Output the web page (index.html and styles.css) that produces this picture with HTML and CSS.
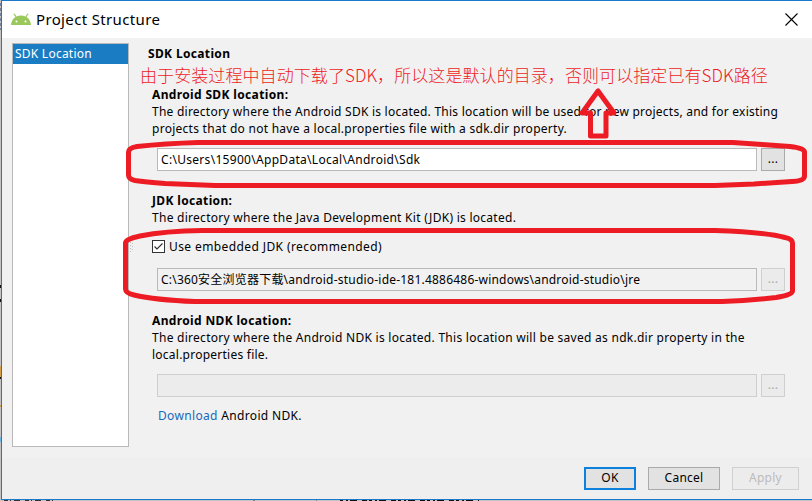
FILE: index.html
```html
<!DOCTYPE html>
<html lang="en">
<head>
<meta charset="utf-8">
<title>Project Structure</title>
<link rel="stylesheet" href="styles.css">
</head>
<body>
<div class="dialog">
  <header class="titlebar">
    <svg class="robot" width="20" height="13" viewBox="0 0 20 13"><path d="M0 12C.3 8.200 2 5.500 4.500 4L2.500 1 3.500.4 5.600 3.500Q10 1.700 14.400 3.500L16.500.4 17.500 1 15.500 4C18 5.500 19.700 8.200 20 12Z" fill="#9bc85b"/><circle cx="5.500" cy="8.500" r="1" fill="#fff"/><circle cx="14.500" cy="8.500" r="1" fill="#fff"/></svg>
    <h1 class="title">Project Structure</h1>
    <svg class="close" width="13" height="13" viewBox="0 0 13 13"><path d="M.5.500l12 12M12.500.500l-12 12" stroke="#000" stroke-width="1.100"/></svg>
  </header>
  <main class="body">
    <nav class="sidebar"><div class="item">SDK Location</div></nav>
    <div class="content">
      <h2 class="heading">SDK Location</h2>
      <section class="sdk">
        <h3>Android SDK location:</h3>
        <p>The directory where the Android SDK is located. This location will be used for new projects, and for existing<br><span class="wider">projects that do not have a local.properties file with a sdk.dir property.</span></p>
        <div class="row"><div class="field"><span class="path">C:\Users\15900\AppData\Local\Android\Sdk</span></div><div class="browse">...</div></div>
      </section>
      <section class="jdk">
        <h3>JDK location:</h3>
        <p class="wider">The directory where the Java Development Kit (JDK) is located.</p>
        <div class="check"><svg width="13" height="13" viewBox="0 0 13 13"><rect x=".5" y=".5" width="12" height="12" fill="#fff" stroke="#333"/><path d="M2.500 6.500L5 9l5.500-5.500" fill="none" stroke="#333" stroke-width="1.200"/></svg><span class="check-label">Use embedded JDK (recommended)</span></div>
        <div class="row"><div class="field readonly">C:\360安全浏览器下载\android-studio-ide-181.4886486-windows\android-studio\jre</div><div class="browse off">...</div></div>
      </section>
      <section class="ndk">
        <h3>Android NDK location:</h3>
        <p><span class="wider">The directory where the Android NDK is located. This location will be saved as ndk.dir property in the</span><br>local.properties file.</p>
        <div class="row"><div class="field disabled"></div><div class="browse off">...</div></div>
        <div class="download"><a>Download</a> Android NDK.</div>
      </section>
    </div>
  </main>
  <footer class="footer">
    <div class="btn ok">OK</div><div class="btn cancel">Cancel</div><div class="btn apply">Apply</div>
  </footer>
</div>
<div class="note">由于安装过程中自动下载了SDK，所以这是默认的目录，否则可以指定已有SDK路径</div>
<svg class="marks" width="812" height="501" viewBox="0 0 812 501">
  <g fill="none" stroke="#ed1c24" stroke-width="5" stroke-linejoin="round">
    <path d="M198 142.500H733L762 144.500 790 146.500Q804.500 148 804.500 152V176Q804.500 181 792 181.500L754 184 715 185.500H215L165 183.500Q145 182 135 180.500Q128.500 179 128.500 175V152Q128.500 148 137 146.500Q165 143.500 198 142.500Z"/>
    <path d="M202 230.500H715Q765 232 785 237.500Q792.500 239 792.500 243V291Q792.500 295 776 297.500Q750 300.500 722 301.500H195Q155 300 134 295Q125.500 293 125.500 289V243Q125.500 239 140 236Q165 231 202 230.500Z"/>
    <path d="M598 91L582 113H590.500V136H606V113H614Z"/>
  </g>
  <path d="M130.500 242v10M132.500 243v9" stroke="#bbb" stroke-dasharray="1 2"/>
</svg>
<svg class="edge" width="812" height="501" viewBox="0 0 812 501">
  <path d="M0 0h1v501H0zM0 500h812v1H0z" fill="#c4c4c4"/>
  <path d="M.5 3v27" stroke="#71839c" stroke-dasharray="3 2"/>
  <path d="M.5 285v3M.5 299v3" stroke="#111"/>
  <path d="M.5 366v11M.5 405v2" stroke="#d4a04b"/>
  <path d="M.5 377v2" stroke="#111"/>
  <path d="M.5 437v5" stroke="#6bb6e5"/>
  <path d="M4 500.500h52" stroke="#333" stroke-dasharray="4 2 1 3 6 5"/>
  <path d="M340 500.500h139" stroke="#111" stroke-dasharray="3 3 2 2 7 5 5 2"/>
  <path d="M253 500.500h2M316 500.500h1" stroke="#888"/>
</svg>
</body>
</html>
```
FILE: styles.css
```css
* { box-sizing: border-box; }
body { margin: 0; width: 812px; height: 501px; overflow: hidden; position: relative; background: #c4c4c4; font: 12px/17px "Noto Sans", "Noto Sans CJK SC", sans-serif; letter-spacing: .24px; color: #000; }
h1, h2, h3, p { margin: 0; font-size: inherit; font-weight: 400; }
.dialog { width: 811px; height: 500px; margin-left: 1px; border: solid #1979ca; border-width: 1px 0 1px 1px; background: #f1f1f1; display: flex; flex-direction: column; white-space: nowrap; }
.titlebar { height: 37px; background: #fff; display: flex; align-items: center; padding: 0 14px 0 9px; }
.title { font-size: 15px; line-height: 20px; letter-spacing: .35px; margin: -2px 0 0 5px; flex: 1; }
.robot { margin-bottom: 1px; }
.body { height: 419px; display: flex; padding: 5px 0 0 10px; }
.sidebar { width: 117px; height: 404px; border: 1px solid #b9b9b9; background: #fff; }
.item { height: 20px; line-height: 20px; padding-left: 2px; background: #1a7dc4; color: #fff; }
.content { margin-left: 19px; width: 645px; }
.heading, h3 { font-weight: 700; letter-spacing: .35px; }
.heading { height: 43px; padding-top: 2px; }
section { padding-left: 4px; height: 106px; }
.jdk { height: 120px; }
.wider { letter-spacing: .27px; }
.path { letter-spacing: .3px; }
.check-label { letter-spacing: .4px; }
.row { display: flex; gap: 4px; margin: 11px 0 0 5px; }
.field { width: 600px; height: 23px; line-height: 21px; border: 1px solid #b9b9b9; background: #fff; padding-left: 3px; }
.readonly { background: #f1f1f1; letter-spacing: .21px; }
.disabled { background: #ececec; border-color: #cecece; }
.browse { width: 24px; height: 23px; line-height: 20px; text-align: center; border: 1px solid #aaa; background: #e2e2e2; }
.off { border-color: #cfcfcf; background: #ebebeb; color: #aaa; }
.check { display: flex; align-items: center; gap: 4px; height: 17px; margin-top: 12px; }
.jdk .row { margin-top: 13px; }
.download { margin: 10px 0 0 6px; letter-spacing: .34px; }
.download a { color: #1769bb; }
.footer { flex: 1; background: #efefef; display: flex; gap: 12px; justify-content: flex-end; padding: 10px 13px 0 0; }
.btn { height: 23px; line-height: 20px; text-align: center; background: #e2e2e2; border: 1px solid #aaa; }
.ok { width: 52px; border: 2px solid #0b81dd; line-height: 18px; }
.cancel { width: 72px; }
.apply { width: 67px; background: #ececec; border-color: #d0d0d0; color: #bbb; }
.note { position: absolute; left: 140px; top: 63px; font: 300 17px/24px "Noto Sans CJK SC", sans-serif; letter-spacing: .08px; color: #ed1c24; white-space: nowrap; }
.marks, .edge { position: absolute; left: 0; top: 0; }
```
